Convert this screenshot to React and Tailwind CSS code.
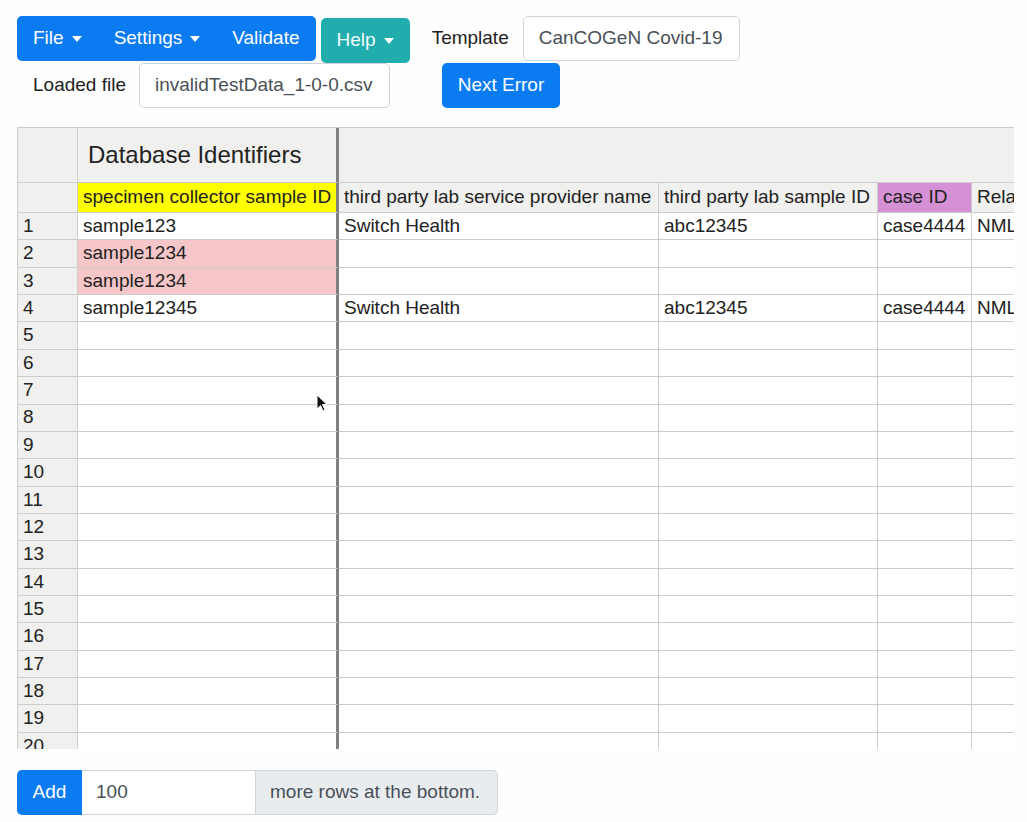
import React from "react";

const FONT = { fontFamily: '"Liberation Sans", Arial, sans-serif' };

const Caret = () => (
  <span className="ml-[8px] inline-block h-0 w-0 border-x-[5.5px] border-t-[6px] border-x-transparent border-t-white align-middle" />
);

const columns = [
  { key: "id", title: "specimen collector sample ID", w: 261, thick: true, hl: "bg-[#ffff00]" },
  { key: "provider", title: "third party lab service provider name", w: 320 },
  { key: "labId", title: "third party lab sample ID", w: 219 },
  { key: "caseId", title: "case ID", w: 94, hl: "bg-[#d691d6]" },
  { key: "related", title: "Related specimen primary ID", w: 260 },
];

const data = [
  { id: "sample123", provider: "Switch Health", labId: "abc12345", caseId: "case4444", related: "NML-LIMS" },
  { id: "sample1234", bad: true },
  { id: "sample1234", bad: true },
  { id: "sample12345", provider: "Switch Health", labId: "abc12345", caseId: "case4444", related: "NML-LIMS" },
];

const rows = Array.from({ length: 22 }, (_, i) => data[i] || {});

const cellBorder = (col) =>
  col.thick ? "border-r-[3px] border-r-[#808080]" : "border-r border-r-[#cccccc]";

export default function App() {
  return (
    <div className="min-h-screen bg-[#fefefe] px-[17px] pt-[16px] text-[19px]" style={FONT}>
      {/* toolbar */}
      <div className="flex h-[45px] items-start">
        <div className="flex h-[45px] items-center rounded-[5px] bg-[#0b7bf2] text-white">
          <span className="flex items-center px-[16px]">File<Caret /></span>
          <span className="flex items-center px-[16px]">Settings<Caret /></span>
          <span className="px-[16px]">Validate</span>
        </div>
        <div className="relative z-10 ml-[5px] mt-[2px] flex h-[45px] items-center rounded-[5px] bg-[#21adad] px-[16px] text-[#f2fbfb]">
          Help<Caret />
        </div>
        <span className="ml-[22px] flex h-[45px] items-center text-[#222]">Template</span>
        <div className="ml-[14px] flex h-[45px] w-[217px] items-center rounded-[5px] border border-[#ced4da] bg-white px-[15px] text-[#495057]">
          CanCOGeN Covid-19
        </div>
      </div>
      <div className="mt-[2px] flex items-center">
        <span className="ml-[16px] text-[#222]">Loaded file</span>
        <div className="ml-[13px] flex h-[45px] w-[251px] items-center rounded-[5px] border border-[#ced4da] bg-white px-[15px] text-[#495057]">
          invalidTestData_1-0-0.csv
        </div>
        <button className="ml-[52px] h-[45px] w-[118px] rounded-[5px] bg-[#0b7bf2] text-white">
          Next Error
        </button>
      </div>

      {/* grid */}
      <div className="relative mt-[19px] h-[622px] w-[997px] overflow-hidden border-t border-[#cccccc] text-[#222]">
        <div className="w-[1300px]">
          <div className="flex h-[55px]">
            <div className="w-[61px] shrink-0 border-x border-b border-[#cccccc] bg-[#f0f0ee]" />
            <div className="flex w-[261px] shrink-0 items-center border-b border-b-[#cccccc] border-r-[3px] border-r-[#808080] bg-[#f0f0ee] pl-[10px] text-[24px]">
              Database Identifiers
            </div>
            <div className="flex-1 border-b border-[#cccccc] bg-[#f0f0ee]" />
          </div>
          <div className="flex h-[30px]">
            <div className="w-[61px] shrink-0 border-x border-b border-[#cccccc] bg-[#f0f0ee]" />
            {columns.map((c) => (
              <div
                key={c.key}
                style={{ width: c.w }}
                className={`flex shrink-0 items-center overflow-hidden whitespace-nowrap border-b border-b-[#cccccc] pl-[5px] ${cellBorder(c)} ${c.hl || "bg-[#f0f0ee]"}`}
              >
                {c.title}
              </div>
            ))}
          </div>
          {rows.map((r, i) => (
            <div key={i} className="flex h-[27.37px]">
              <div className="flex w-[61px] shrink-0 items-center border-x border-b border-[#cccccc] bg-[#f0f0ee] pl-[5px]">
                {i + 1}
              </div>
              {columns.map((c) => (
                <div
                  key={c.key}
                  style={{ width: c.w }}
                  className={`flex shrink-0 items-center overflow-hidden whitespace-nowrap border-b border-b-[#cccccc] pl-[5px] ${cellBorder(c)} ${
                    r.bad && c.key === "id" ? "bg-[#f6c6c8]" : "bg-white"
                  }`}
                >
                  {r[c.key] || ""}
                </div>
              ))}
            </div>
          ))}
        </div>
        {/* mouse pointer */}
        <svg className="absolute left-[299px] top-[266px]" width="12" height="19" viewBox="0 0 12 19">
          <path d="M1 1 L1 15 L4.5 11.5 L7 17 L9 16 L6.5 10.5 L11 10.5 Z" fill="#111" stroke="#fff" strokeWidth="1" />
        </svg>
      </div>

      {/* add rows */}
      <div className="mt-[21px] flex h-[45px] w-[481px] items-stretch">
        <button className="w-[65px] rounded-l-[5px] bg-[#0b7bf2] text-white">Add</button>
        <div className="flex w-[173px] items-center border-y border-[#ced4da] bg-white pl-[14px] text-[#495057]">100</div>
        <div className="flex flex-1 items-center rounded-r-[5px] border border-[#ced4da] bg-[#e9ecef] pl-[14px] text-[#495057]">
          more rows at the bottom.
        </div>
      </div>
    </div>
  );
}
